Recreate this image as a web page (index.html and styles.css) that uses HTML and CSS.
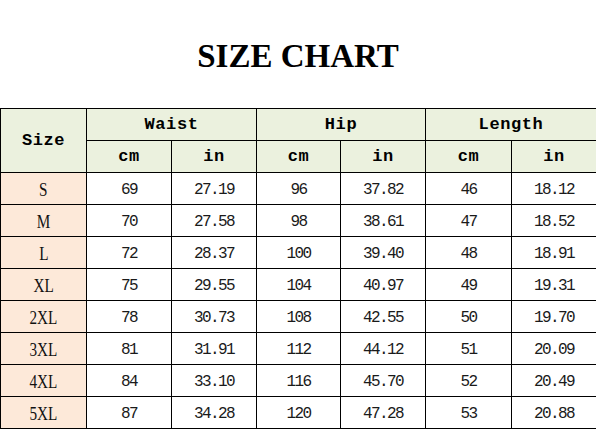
FILE: index.html
```html
<!DOCTYPE html>
<html>
<head>
<meta charset="utf-8">
<link rel="stylesheet" href="styles.css">
</head>
<body>
<div class="title">SIZE CHART</div>
<table class="chart">
  <colgroup>
    <col class="c-size"><col class="c-a"><col class="c-a"><col class="c-b"><col class="c-a"><col class="c-c"><col class="c-a">
  </colgroup>
  <thead>
    <tr>
      <th rowspan="2" class="hd">Size</th>
      <th colspan="2" class="hd">Waist</th>
      <th colspan="2" class="hd">Hip</th>
      <th colspan="2" class="hd">Length</th>
    </tr>
    <tr>
      <th class="hd">cm</th><th class="hd">in</th>
      <th class="hd">cm</th><th class="hd">in</th>
      <th class="hd">cm</th><th class="hd">in</th>
    </tr>
  </thead>
  <tbody>
    <tr><td class="sz"><span>S</span></td><td>69</td><td>27.19</td><td>96</td><td>37.82</td><td>46</td><td>18.12</td></tr>
    <tr><td class="sz"><span>M</span></td><td>70</td><td>27.58</td><td>98</td><td>38.61</td><td>47</td><td>18.52</td></tr>
    <tr><td class="sz"><span>L</span></td><td>72</td><td>28.37</td><td>100</td><td>39.40</td><td>48</td><td>18.91</td></tr>
    <tr><td class="sz"><span>XL</span></td><td>75</td><td>29.55</td><td>104</td><td>40.97</td><td>49</td><td>19.31</td></tr>
    <tr><td class="sz"><span>2XL</span></td><td>78</td><td>30.73</td><td>108</td><td>42.55</td><td>50</td><td>19.70</td></tr>
    <tr><td class="sz"><span>3XL</span></td><td>81</td><td>31.91</td><td>112</td><td>44.12</td><td>51</td><td>20.09</td></tr>
    <tr><td class="sz"><span>4XL</span></td><td>84</td><td>33.10</td><td>116</td><td>45.70</td><td>52</td><td>20.49</td></tr>
    <tr><td class="sz"><span>5XL</span></td><td>87</td><td>34.28</td><td>120</td><td>47.28</td><td>53</td><td>20.88</td></tr>
  </tbody>
</table>
</body>
</html>
```
FILE: styles.css
```css
html, body {
  margin: 0;
  padding: 0;
  background: #ffffff;
}
.title {
  font-family: "Liberation Serif", serif;
  font-weight: bold;
  font-size: 33px;
  line-height: 40px;
  padding-top: 36px;
  padding-bottom: 32px;
  text-align: center;
  color: #000;
}
.chart {
  width: 596px;
  border-collapse: collapse;
  table-layout: fixed;
}
.c-size { width: 86px; }
.c-a { width: 85px; }
.c-b { width: 84px; }
.c-c { width: 86px; }
.chart tr {
  height: 32px;
}
.chart th, .chart td {
  border: 1px solid #000;
  padding: 0;
  line-height: 20px;
  text-align: center;
  vertical-align: middle;
}
.chart .hd {
  background: #ebf1de;
  font-family: "Liberation Mono", monospace;
  font-weight: bold;
  font-size: 17px;
  letter-spacing: 0.6px;
  color: #000;
  padding-top: 1px;
}
.chart td {
  font-family: "Liberation Mono", monospace;
  font-size: 16px;
  letter-spacing: -1.6px;
  color: #1a1a1a;
  padding-top: 3px;
}
.chart td.sz {
  background: #fde9d9;
  font-family: "Liberation Serif", serif;
  font-size: 19px;
  letter-spacing: 0;
  color: #111;
  padding-top: 2px;
}
.sz span {
  display: inline-block;
  transform: scaleX(0.8);
}
```
